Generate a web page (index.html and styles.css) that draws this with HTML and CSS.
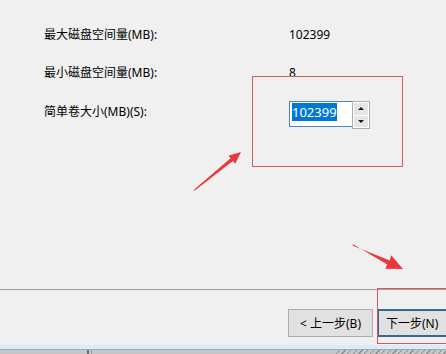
FILE: index.html
```html
<!DOCTYPE html>
<html lang="zh-CN">
<head>
  <meta charset="UTF-8">
  <title>新建简单卷向导</title>
  <link rel="stylesheet" href="styles.css">
</head>
<body>
  <div class="wizard">
    <!-- Size fields -->
    <div class="content">
      <div class="row row-max">
        <span class="label">最大磁盘空间量(MB):</span>
        <span class="value">102399</span>
      </div>
      <div class="row row-min">
        <span class="label">最小磁盘空间量(MB):</span>
        <span class="value">8</span>
      </div>
      <div class="row row-size">
        <label class="label" for="size">简单卷大小(MB)(S):</label>
        <div class="spin">
          <div class="spin-input" id="size"><span class="selected">102399</span></div>
          <div class="spin-buttons">
            <div class="spin-btn"><span class="tri-up"></span></div>
            <div class="spin-btn"><span class="tri-down"></span></div>
          </div>
        </div>
      </div>
    </div>

    <!-- Buttons -->
    <div class="footer">
      <button class="btn">&lt; 上一步(B)</button>
      <button class="btn btn-default">下一步(N)</button>
    </div>

    <!-- Taskbar edge -->
    <div class="taskbar">
      <div class="taskbar-sep"></div>
      <div class="taskbar-hatch"></div>
    </div>
  </div>

  <!-- Annotations -->
  <div class="mark mark-input"></div>
  <div class="mark mark-next"></div>
  <svg class="arrows" width="446" height="354" viewBox="0 0 446 354">
    <polygon fill="#e8383a" points="194.5,190.8 232.9,161.1 235.2,163.8 241,152 228.4,155.7 230.6,158.3 194,189.8"/>
    <polygon fill="#e8383a" points="352.5,245.6 389.7,260.4 391.2,255.3 403,269 385.2,268.8 387.3,264.6 353.2,244.3"/>
  </svg>
</body>
</html>
```

FILE: styles.css
```css
body {
  margin: 0;
  width: 446px;
  height: 354px;
  overflow: hidden;
  background-color: #f0f0f0;
  font-family: "Noto Sans", "Noto Sans CJK SC", sans-serif;
  font-size: 12px;
  color: #000000;
  position: relative;
}

.wizard {
  display: flex;
  flex-direction: column;
  height: 354px;
}

/* Size fields */
.content {
  flex: 1;
  padding: 26px 0 0 44px;
}

.row {
  display: flex;
  align-items: flex-start;
  line-height: 18px;
}

.row-min,
.row-size {
  margin-top: 20px;
}

.label {
  width: 245px;
}

.row-size .label {
  padding-top: 1px;
}

.spin {
  display: flex;
  height: 28px;
  margin-top: -1px;
}

.spin-input {
  width: 63px;
  height: 26px;
  background: #ffffff;
  border: 1px solid #4d86b8;
  border-right: none;
  padding: 2px 0 0 2px;
  box-sizing: border-box;
  font-size: 13px;
  line-height: 17px;
}

.selected {
  background-color: #0078d7;
  color: #ffffff;
}

.spin-buttons {
  display: flex;
  flex-direction: column;
  width: 18px;
  height: 28px;
  border: 1px solid #adadad;
  box-sizing: border-box;
  background: #ffffff;
}

.spin-btn {
  flex: 1;
  display: flex;
  align-items: center;
  justify-content: center;
  background: #e5e5e5;
  margin: 1px;
}

.spin-btn + .spin-btn {
  margin-top: 0;
}

.tri-up {
  border-left: 3px solid transparent;
  border-right: 3px solid transparent;
  border-bottom: 3px solid #1a1a1a;
}

.tri-down {
  border-left: 3px solid transparent;
  border-right: 3px solid transparent;
  border-top: 3px solid #1a1a1a;
}

/* Buttons */
.footer {
  display: flex;
  gap: 4px;
  height: 55px;
  padding: 19px 0 0 288px;
  border-top: 1px solid #a0a0a0;
  box-sizing: border-box;
}

.btn {
  flex: none;
  width: 85px;
  height: 28px;
  padding: 0;
  font-family: inherit;
  font-size: 12px;
  color: #000000;
  background-color: #e1e1e1;
  border: 1px solid #adadad;
}

.btn-default {
  border: 2px solid #35698f;
  text-align: left;
  padding-left: 7px;
}

/* Taskbar edge */
.taskbar {
  height: 10px;
  background: linear-gradient(#f0f0f0 0, #f0f0f0 1px, #dcecf6 1px, #dcecf6 5px, #8fb2c8 5px, #8fb2c8 6px, #c6c6c6 6px);
  position: relative;
}

.taskbar-sep {
  position: absolute;
  left: 87px;
  top: 6px;
  width: 5px;
  height: 4px;
  border-left: 2px solid #6f6f6f;
  border-right: 1px solid #9a9a9a;
  box-sizing: border-box;
}

.taskbar-hatch {
  position: absolute;
  left: 335px;
  right: 0;
  top: 6px;
  bottom: 0;
  background: repeating-linear-gradient(135deg, #c6c6c6 0, #c6c6c6 3px, #8d8d8d 3px, #8d8d8d 4px);
}

/* Annotations */
.mark {
  position: absolute;
  border: 1.5px solid #d65a5c;
}

.mark-input {
  left: 252px;
  top: 76px;
  width: 149px;
  height: 89px;
}

.mark-next {
  left: 377px;
  top: 288px;
  width: 80px;
  height: 54px;
}

.arrows {
  position: absolute;
  left: 0;
  top: 0;
  pointer-events: none;
}
```
